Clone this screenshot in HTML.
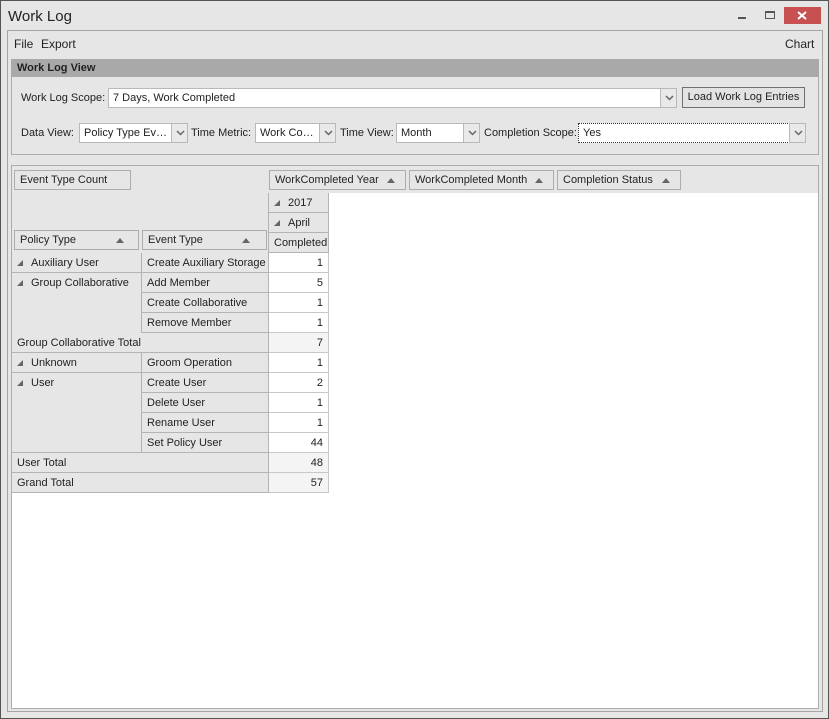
<!DOCTYPE html>
<html><head><meta charset="utf-8"><style>
*{box-sizing:border-box;margin:0;padding:0}
body{width:829px;height:719px;background:#e6e6e6;font-family:"Liberation Sans",sans-serif;font-size:11px;color:#222;position:relative;overflow:hidden}
.a{position:absolute}
.t{position:absolute;white-space:nowrap;line-height:21px}
.box{position:absolute;border:1px solid #adadad;background:#e6e6e6;line-height:19px;padding-left:5px;white-space:nowrap}
.arr{position:absolute;right:10px;top:7px;width:0;height:0;border-left:4px solid transparent;border-right:4px solid transparent;border-bottom:5px solid #666}
.cb{position:absolute;border:1px solid #b9b9b9;background:#fff;line-height:19px;padding-left:4px;white-space:nowrap;overflow:hidden}
.dd{position:absolute;border:1px solid #b9b9b9;background:#e9e9e9;width:17px}
.dd svg{position:absolute;left:4px;top:6px}
.c{position:absolute;border-right:1px solid #b4b4b4;border-bottom:1px solid #b4b4b4;line-height:20px;padding-left:5px;white-space:nowrap;background:#e6e6e6}
.v{position:absolute;border-right:1px solid #c8c8c8;border-bottom:1px solid #c8c8c8;background:#fff;line-height:20px;text-align:right;padding-right:5px}
.tri{display:inline-block;width:0;height:0;border-left:6px solid transparent;border-bottom:6px solid #666;margin-right:8px;vertical-align:0px}
</style></head><body>
<div class="a" style="left:0;top:0;width:829px;height:719px;border:1px solid #555"></div>
<div class="t" style="left:8px;top:6px;font-size:15px">Work Log</div>
<div class="a" style="left:738px;top:17px;width:8px;height:2px;background:#555"></div>
<div class="a" style="left:765px;top:11px;width:10px;height:8px;border:1px solid #555;border-top-width:2px"></div>
<div class="a" style="left:784px;top:7px;width:37px;height:17px;background:#c75050"></div>
<svg class="a" style="left:797px;top:11px" width="10" height="9"><path d="M1 1L9 8M9 1L1 8" stroke="#fff" stroke-width="2"/></svg>
<div class="a" style="left:7px;top:30px;width:816px;height:682px;border:1px solid #a5a5a5"></div>
<div class="t" style="left:14px;top:34px;font-size:12px">File</div>
<div class="t" style="left:41px;top:34px;font-size:12px">Export</div>
<div class="t" style="left:785px;top:34px;font-size:12px">Chart</div>
<div class="a" style="left:11px;top:59px;width:808px;height:96px;border:1px solid #adadad"></div>
<div class="a" style="left:11px;top:59px;width:808px;height:18px;background:#a9a9a9"></div>
<div class="t" style="left:17px;top:58px;font-weight:bold;line-height:20px">Work Log View</div>
<div class="t" style="left:21px;top:88px">Work Log Scope:</div>
<div class="cb" style="left:108px;top:88px;width:553px;height:20px">7 Days, Work Completed</div>
<div class="dd" style="left:660px;top:88px;height:20px"><svg width="9" height="6"><path d="M1 1L4.5 4.5L8 1" stroke="#666" stroke-width="1.5" fill="none"/></svg></div>
<div class="a" style="left:682px;top:87px;width:123px;height:21px;border:1px solid #707070;background:#e3e3e3;line-height:19px;text-align:center">Load Work Log Entries</div>
<div class="t" style="left:21px;top:123px">Data View:</div>
<div class="cb" style="left:79px;top:123px;width:93px;height:20px">Policy Type Ev…</div>
<div class="dd" style="left:171px;top:123px;height:20px"><svg width="9" height="6"><path d="M1 1L4.5 4.5L8 1" stroke="#666" stroke-width="1.5" fill="none"/></svg></div>
<div class="t" style="left:191px;top:123px">Time Metric:</div>
<div class="cb" style="left:255px;top:123px;width:65px;height:20px">Work Co…</div>
<div class="dd" style="left:319px;top:123px;height:20px"><svg width="9" height="6"><path d="M1 1L4.5 4.5L8 1" stroke="#666" stroke-width="1.5" fill="none"/></svg></div>
<div class="t" style="left:340px;top:123px">Time View:</div>
<div class="cb" style="left:396px;top:123px;width:68px;height:20px">Month</div>
<div class="dd" style="left:463px;top:123px;height:20px"><svg width="9" height="6"><path d="M1 1L4.5 4.5L8 1" stroke="#666" stroke-width="1.5" fill="none"/></svg></div>
<div class="t" style="left:484px;top:123px">Completion Scope:</div>
<div class="cb" style="left:578px;top:123px;width:212px;height:20px;border:1px dotted #333;line-height:19px">Yes</div>
<div class="dd" style="left:789px;top:123px;height:20px"><svg width="9" height="6"><path d="M1 1L4.5 4.5L8 1" stroke="#666" stroke-width="1.5" fill="none"/></svg></div>

<div class="a" style="left:11px;top:165px;width:808px;height:544px;border:1px solid #adadad;background:#fff"></div>
<div class="a" style="left:12px;top:166px;width:806px;height:27px;background:#e6e6e6"></div>
<div class="a" style="left:12px;top:193px;width:257px;height:60px;background:#e6e6e6"></div>
<div class="box" style="left:14px;top:170px;width:117px;height:20px">Event Type Count</div>
<div class="box" style="left:269px;top:170px;width:137px;height:20px">WorkCompleted Year<span class="arr"></span></div>
<div class="box" style="left:409px;top:170px;width:145px;height:20px">WorkCompleted Month<span class="arr"></span></div>
<div class="box" style="left:557px;top:170px;width:124px;height:20px">Completion Status<span class="arr"></span></div>
<div class="box" style="left:14px;top:230px;width:125px;height:20px">Policy Type<span class="arr" style="right:14px"></span></div>
<div class="box" style="left:142px;top:230px;width:125px;height:20px">Event Type<span class="arr" style="right:16px"></span></div>
<div class="c" style="left:268px;top:193px;width:61px;height:20px;border-left:1px solid #b4b4b4"><span class="tri"></span>2017</div>
<div class="c" style="left:268px;top:213px;width:61px;height:20px;border-left:1px solid #b4b4b4"><span class="tri"></span>April</div>
<div class="c" style="left:268px;top:233px;width:61px;height:20px;border-left:1px solid #b4b4b4;padding-left:5px">Completed</div>

<div class="a" style="left:12px;top:253px;width:257px;height:240px;background:#e6e6e6"></div>
<div class="c" style="left:12px;top:253px;width:130px;height:20px"><span class="tri"></span>Auxiliary User</div>
<div class="c" style="left:12px;top:273px;width:130px;height:80px"><span class="tri"></span>Group Collaborative</div>
<div class="c" style="left:12px;top:333px;width:257px;height:20px">Group Collaborative Total</div>
<div class="c" style="left:12px;top:353px;width:130px;height:20px"><span class="tri"></span>Unknown</div>
<div class="c" style="left:12px;top:373px;width:130px;height:80px"><span class="tri"></span>User</div>
<div class="c" style="left:12px;top:453px;width:257px;height:20px">User Total</div>
<div class="c" style="left:12px;top:473px;width:257px;height:20px">Grand Total</div>
<div class="c" style="left:142px;top:253px;width:127px;height:20px">Create Auxiliary Storage</div>
<div class="c" style="left:142px;top:273px;width:127px;height:20px">Add Member</div>
<div class="c" style="left:142px;top:293px;width:127px;height:20px">Create Collaborative</div>
<div class="c" style="left:142px;top:313px;width:127px;height:20px">Remove Member</div>
<div class="c" style="left:142px;top:353px;width:127px;height:20px">Groom Operation</div>
<div class="c" style="left:142px;top:373px;width:127px;height:20px">Create User</div>
<div class="c" style="left:142px;top:393px;width:127px;height:20px">Delete User</div>
<div class="c" style="left:142px;top:413px;width:127px;height:20px">Rename User</div>
<div class="c" style="left:142px;top:433px;width:127px;height:20px">Set Policy User</div>
<div class="v" style="left:269px;top:253px;width:60px;height:20px">1</div>
<div class="v" style="left:269px;top:273px;width:60px;height:20px">5</div>
<div class="v" style="left:269px;top:293px;width:60px;height:20px">1</div>
<div class="v" style="left:269px;top:313px;width:60px;height:20px">1</div>
<div class="v" style="left:269px;top:333px;width:60px;height:20px;background:#f4f4f4">7</div>
<div class="v" style="left:269px;top:353px;width:60px;height:20px">1</div>
<div class="v" style="left:269px;top:373px;width:60px;height:20px">2</div>
<div class="v" style="left:269px;top:393px;width:60px;height:20px">1</div>
<div class="v" style="left:269px;top:413px;width:60px;height:20px">1</div>
<div class="v" style="left:269px;top:433px;width:60px;height:20px">44</div>
<div class="v" style="left:269px;top:453px;width:60px;height:20px;background:#f4f4f4">48</div>
<div class="v" style="left:269px;top:473px;width:60px;height:20px;background:#f4f4f4">57</div>
</body></html>
